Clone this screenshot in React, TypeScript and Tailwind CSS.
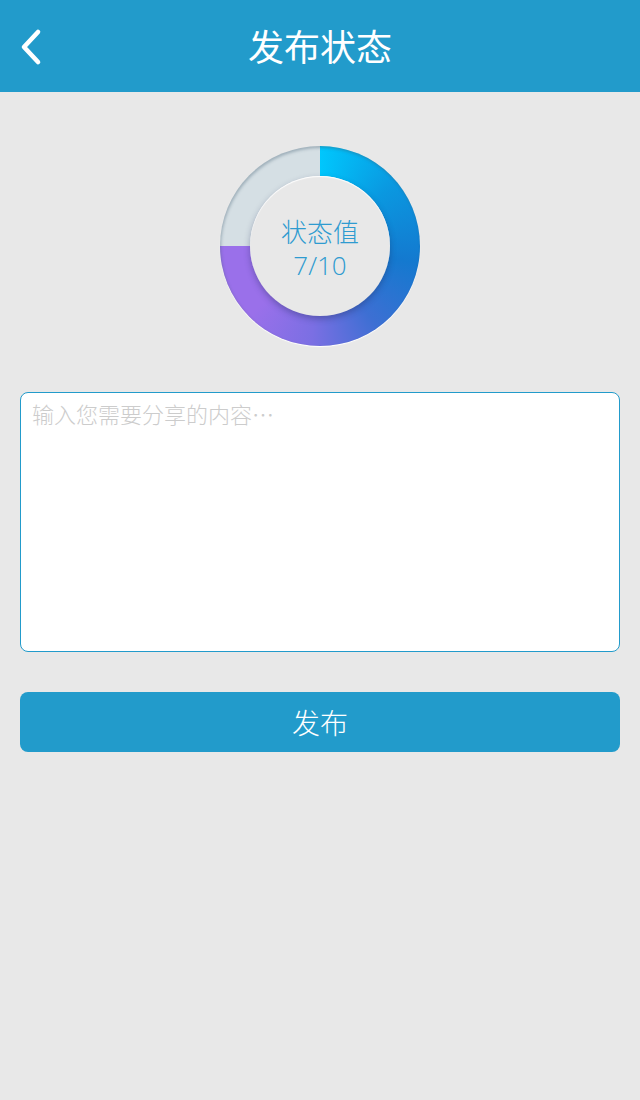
const font = "font-['Noto_Sans_CJK_SC','Noto_Sans',sans-serif]";

function BackIcon() {
  return (
    <svg width="28" height="40" viewBox="0 0 28 40" fill="none">
      <path d="M20 4 L6 19 L20 34" stroke="#ffffff" strokeWidth="4.6" strokeLinecap="round" strokeLinejoin="round" />
    </svg>
  );
}

function StatusRing() {
  return (
    <div className="relative w-[200px] h-[200px] rounded-full bg-[conic-gradient(from_0deg,#00c7fd_0deg,#0a98e0_50deg,#1479cf_100deg,#3d6fd3_145deg,#7b6fe3_185deg,#9a70ea_225deg,#9a70ea_270deg,#d5dfe4_270deg,#d5dfe4_360deg)] shadow-[inset_1px_2px_3px_rgba(60,90,110,0.35),0_1px_1px_#ffffff] flex items-center justify-center">
      <div className="w-[140px] h-[140px] rounded-full bg-[#e8e8e8] shadow-[0_3px_6px_rgba(30,40,90,0.35),inset_0_1px_1px_#ffffff] flex flex-col items-center justify-center text-[#2e9bd0] text-[26px] leading-[34px] font-light pt-[4px]">
        <span>状态值</span>
        <span className="font-['Open_Sans','Noto_Sans',sans-serif]">7/10</span>
      </div>
    </div>
  );
}

export default function App() {
  return (
    <div className={`min-h-[1100px] bg-[#e8e8e8] ${font}`}>
      <header className="relative h-[92px] bg-[#229bcb] flex items-center justify-center">
        <button className="absolute left-[18px] top-[28px]">
          <BackIcon />
        </button>
        <h1 className="text-white text-[36px] leading-none pb-[2px]">发布状态</h1>
      </header>

      <div className="flex justify-center pt-[54px]">
        <StatusRing />
      </div>

      <div className="px-[20px] pt-[46px]">
        <textarea
          placeholder="输入您需要分享的内容⋯"
          className="block w-full h-[260px] resize-none rounded-[8px] border border-[#229bcb] bg-white px-[11px] py-[5px] text-[22px] leading-[30px] font-light text-gray-700 placeholder:text-[#cccccc] outline-none"
        />
        <button className="mt-[40px] w-full h-[60px] rounded-[8px] bg-[#229bcb] text-white text-[28px] font-light">
          发布
        </button>
      </div>
    </div>
  );
}
